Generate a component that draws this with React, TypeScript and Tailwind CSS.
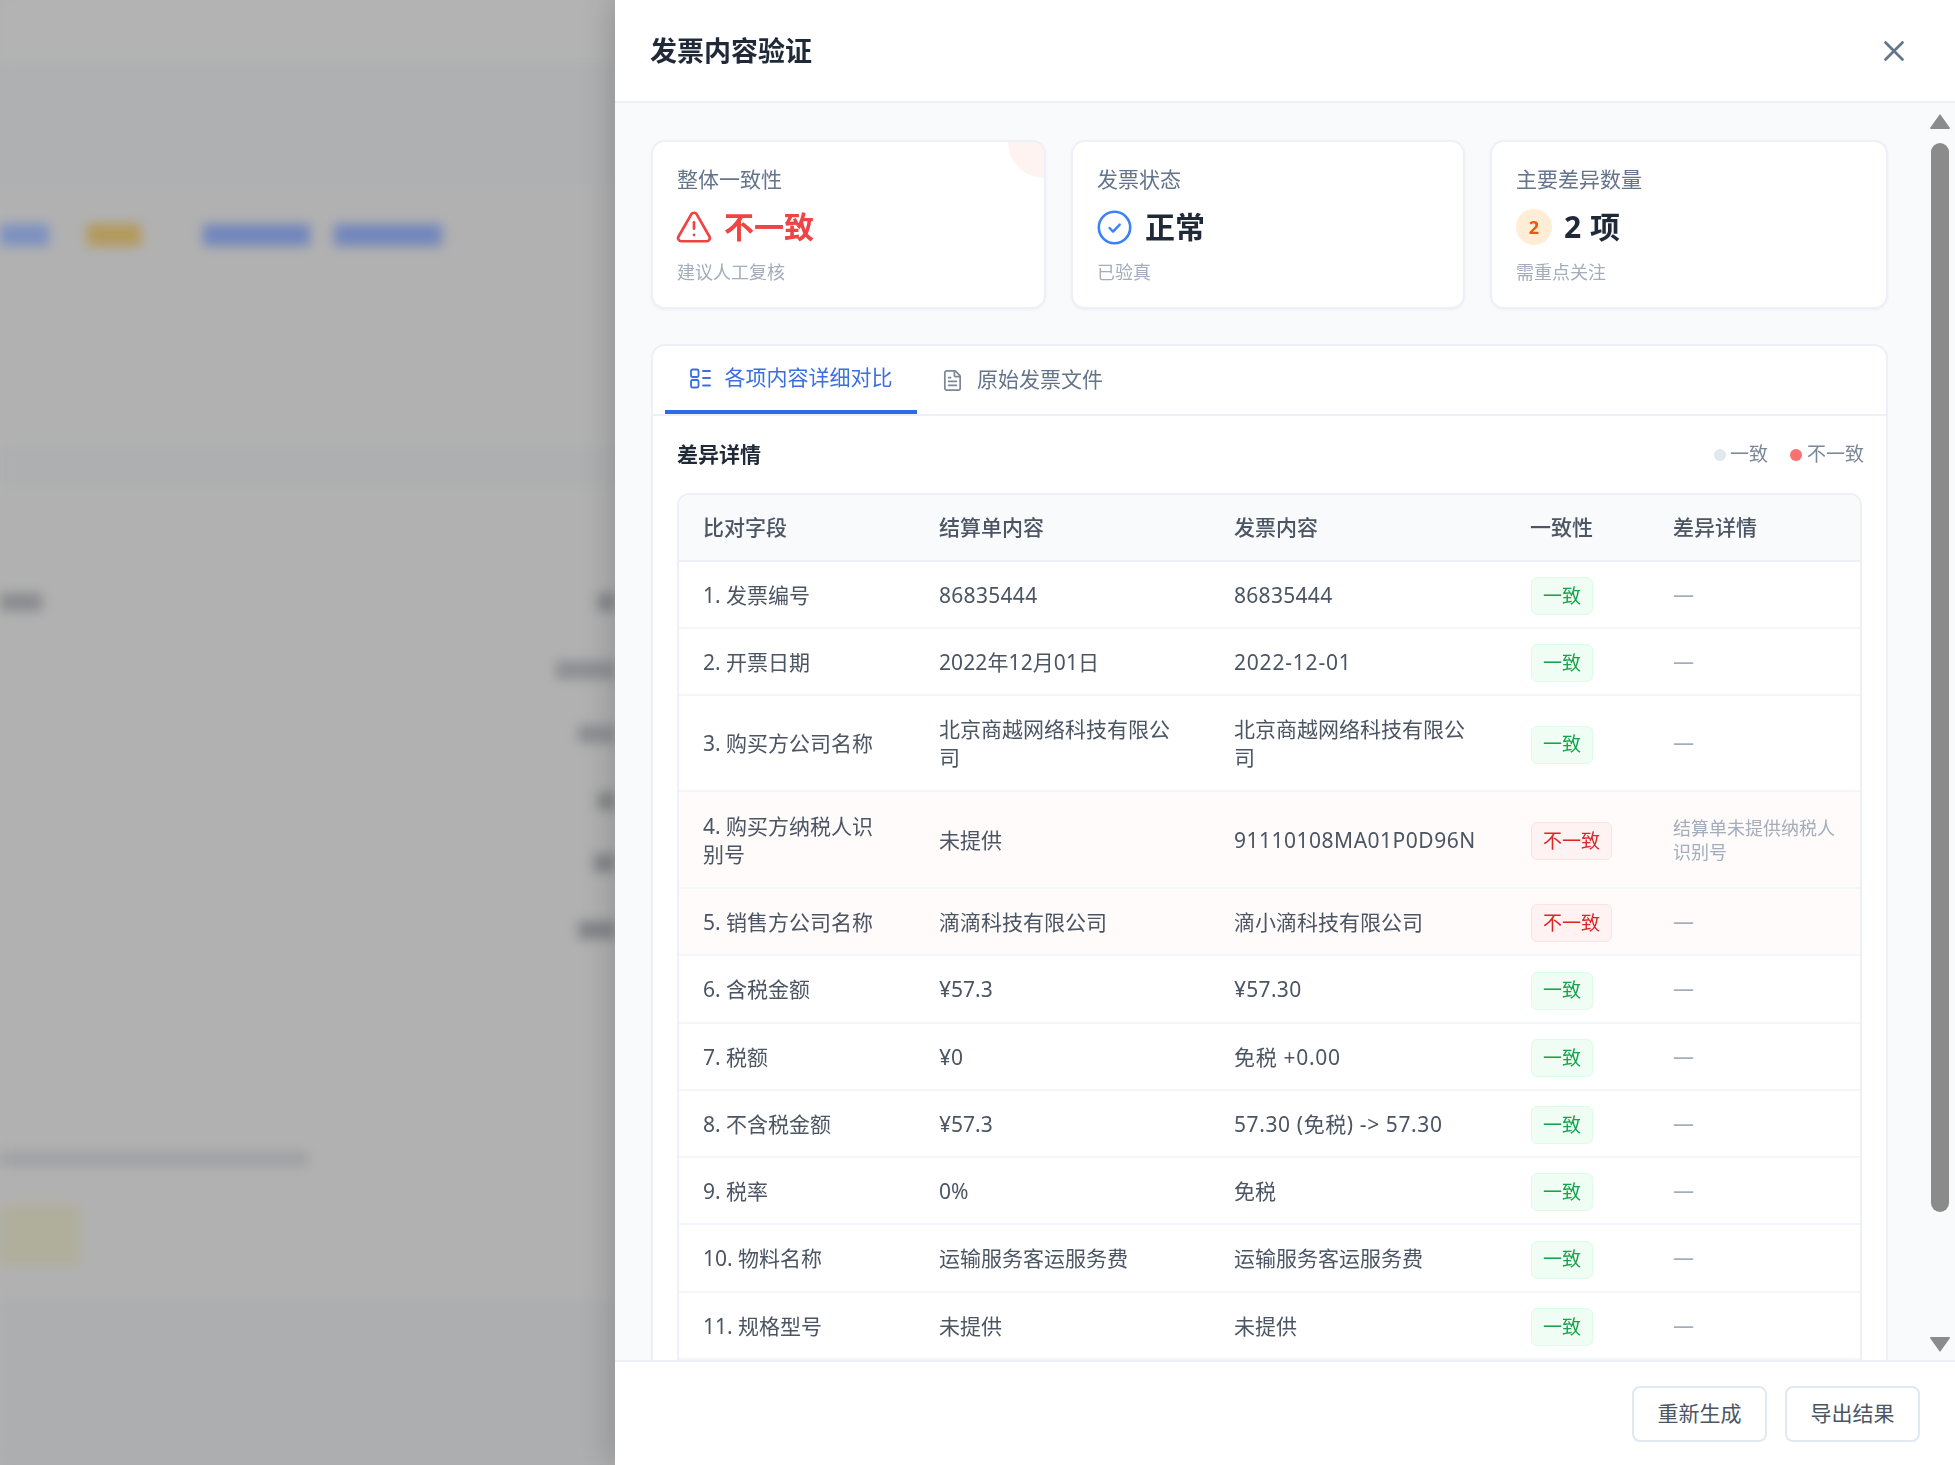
import React from "react";
import { X, FileText, TriangleAlert } from "lucide-react";

type Row = { f: string; a: string; b: string; ok: boolean; d?: string; h: string; at?: string; bt?: string };
const rows: Row[] = [
  { f: "1. 发票编号", a: "86835444", b: "86835444", ok: true, h: "h-[67px]", at: "tracking-[0.3px]", bt: "tracking-[0.3px]" },
  { f: "2. 开票日期", a: "2022年12月01日", b: "2022-12-01", ok: true, h: "h-[67px]", at: "tracking-[0.1px]", bt: "tracking-[0.8px]" },
  { f: "3. 购买方公司名称", a: "北京商越网络科技有限公司", b: "北京商越网络科技有限公司", ok: true, h: "h-[96px]" },
  { f: "4. 购买方纳税人识别号", a: "未提供", b: "91110108MA01P0D96N", ok: false, d: "结算单未提供纳税人识别号", h: "h-[97px]", bt: "tracking-[0.5px]" },
  { f: "5. 销售方公司名称", a: "滴滴科技有限公司", b: "滴小滴科技有限公司", ok: false, h: "h-[67px]" },
  { f: "6. 含税金额", a: "¥57.3", b: "¥57.30", ok: true, h: "h-[68px]", bt: "tracking-[0.3px]" },
  { f: "7. 税额", a: "¥0", b: "免税 +0.00", ok: true, h: "h-[67px]", bt: "tracking-[0.7px]" },
  { f: "8. 不含税金额", a: "¥57.3", b: "57.30 (免税) -> 57.30", ok: true, h: "h-[67px]", bt: "tracking-[0.6px]" },
  { f: "9. 税率", a: "0%", b: "免税", ok: true, h: "h-[67px]" },
  { f: "10. 物料名称", a: "运输服务客运服务费", b: "运输服务客运服务费", ok: true, h: "h-[68px]" },
  { f: "11. 规格型号", a: "未提供", b: "未提供", ok: true, h: "h-[67px]" },
];

function Backdrop() {
  return (
    <div className="w-[615px] shrink-0 h-full overflow-hidden bg-[#b1b1b1]">
      <div className="blur-[6px] flex flex-col">
        <div className="h-[62px] bg-[#b3b3b3]" />
        <div className="h-[121px] bg-[#afb0b2]" />
        <div className="h-[263px] bg-[#b1b1b1] pt-[42px]">
          <div className="flex items-center h-[20px]">
            <div className="w-[49px] h-[22px] bg-[#7c90c0]" />
            <div className="w-[54px] h-[22px] ml-[38px] bg-[#b3995a]" />
            <div className="w-[107px] h-[22px] ml-[62px] bg-[#7286bc]" />
            <div className="w-[108px] h-[22px] ml-[24px] bg-[#7286bc]" />
          </div>
        </div>
        <div className="h-[40px] bg-[#aeafb0]" />
        <div className="h-[814px] bg-[#b1b1b1] flex flex-col">
          <div className="flex justify-between mt-[107px] h-[18px]">
            <div className="w-[42px] bg-[#8a8b8f]" />
            <div className="w-[17px] bg-[#838488]" />
          </div>
          <div className="flex justify-end mt-[50px] h-[18px]">
            <div className="w-[59px] bg-[#8d8e92]" />
          </div>
          <div className="flex justify-end mt-[46px] h-[18px]">
            <div className="w-[37px] bg-[#8d8e92]" />
          </div>
          <div className="flex justify-end mt-[49px] h-[18px]">
            <div className="w-[17px] bg-[#838488]" />
          </div>
          <div className="flex justify-end mt-[44px] h-[18px]">
            <div className="w-[21px] bg-[#838488]" />
          </div>
          <div className="flex justify-end mt-[49px] h-[18px]">
            <div className="w-[37px] bg-[#838488]" />
          </div>
          <div className="w-[308px] h-[14px] mt-[213px] bg-[#9fa0a4]" />
          <div className="w-[80px] h-[61px] mt-[39px] bg-[#b0af9c]" />
        </div>
        <div className="h-[165px] bg-[#adaeb0]" />
      </div>
    </div>
  );
}

function Card({ label, sub, children, decor }: { label: string; sub: string; children: React.ReactNode; decor?: boolean }) {
  return (
    <div className="relative h-[169px] overflow-hidden rounded-[14px] border-2 border-[#edf1f7] bg-white pl-[24px] pt-[23px] shadow-[0_1px_3px_rgba(15,23,42,0.05)]">
      {decor && <div className="absolute right-[-36px] top-[-36px] h-[72px] w-[72px] rounded-full bg-[#fff3f1]" />}
      <div className="text-[21px] leading-[28px] text-[#64748b]">{label}</div>
      <div className="mt-[14px] flex h-[40px] items-center">{children}</div>
      <div className="mt-[12px] text-[18px] leading-[26px] text-[#a3adbb]">{sub}</div>
    </div>
  );
}

function TabGridIcon() {
  return (
    <svg width="21" height="21" viewBox="0 0 21 21" fill="none" stroke="#3b6fe0" strokeWidth="1.8" className="shrink-0">
      <rect x="1" y="1.5" width="7.5" height="7.5" rx="1.5" />
      <rect x="1" y="12" width="7.5" height="7.5" rx="1.5" />
      <path d="M13 3h7M13 10h7M13 17.5h7" strokeLinecap="round" />
    </svg>
  );
}

function CheckCircle() {
  return (
    <svg width="35" height="35" viewBox="0 0 35 35" fill="none" className="shrink-0">
      <circle cx="17.5" cy="17.5" r="15.7" stroke="#3b82f6" strokeWidth="2.6" />
      <path d="M12.5 18l3.6 3.6 6.6-7" stroke="#3b82f6" strokeWidth="2.4" strokeLinecap="round" strokeLinejoin="round" />
    </svg>
  );
}

function Badge({ ok }: { ok: boolean }) {
  return ok ? (
    <span className="inline-flex h-[38px] items-center rounded-[6px] border border-[#dcfce7] bg-[#f0fdf4] px-[11px] text-[19px] text-[#16a34a]">一致</span>
  ) : (
    <span className="inline-flex h-[38px] items-center rounded-[6px] border border-[#fee2e2] bg-[#fef2f2] px-[11px] text-[19px] text-[#dc2626]">不一致</span>
  );
}

function Scrollbar() {
  return (
    <div className="flex w-[30px] shrink-0 flex-col items-center bg-[#f9fafb] pt-[10px]">
      <svg width="22" height="17" viewBox="0 0 22 17" className="shrink-0">
        <path d="M11 1L21 15a1 1 0 0 1-1 1H2a1 1 0 0 1-1-1z" fill="#8b8b8b" />
      </svg>
      <div className="mt-[13px] h-[1069px] w-[18px] rounded-full bg-[#8b8b8b]" />
      <svg width="22" height="17" viewBox="0 0 22 17" className="mt-[124px] shrink-0">
        <path d="M11 16L1 2a1 1 0 0 1 1-1h18a1 1 0 0 1 1 1z" fill="#8b8b8b" />
      </svg>
    </div>
  );
}

export default function App() {
  return (
    <div className="flex h-[1465px] w-[1955px] overflow-hidden bg-[#b1b1b1] font-['Noto_Sans','Noto_Sans_CJK_SC',sans-serif]">
      <Backdrop />
      <div className="relative flex h-full w-[1340px] flex-col bg-white shadow-[-6px_0_28px_rgba(0,0,0,0.16)] blur-[0.6px]">
        <div className="flex h-[103px] shrink-0 items-center justify-between border-b-2 border-[#edf1f7] pl-[35px] pr-[44px]">
          <div className="text-[27px] font-bold leading-[36px] text-[#1f2937]">发票内容验证</div>
          <X size={34} strokeWidth={1.9} className="text-[#64748b]" />
        </div>

        <div className="flex min-h-0 flex-1 overflow-hidden bg-[#f8fafc]">
          <div className="min-w-0 flex-1 pl-[36px] pr-[37px] pt-[37px]">
            <div className="grid grid-cols-[395px_394px_1fr] gap-[25px]">
              <Card label="整体一致性" sub="建议人工复核" decor>
                <TriangleAlert size={38} strokeWidth={1.7} className="ml-[-2px] shrink-0 text-[#ef4444]" />
                <span className="ml-[11px] text-[30px] font-bold leading-[40px] text-[#ef4444]">不一致</span>
              </Card>
              <Card label="发票状态" sub="已验真">
                <CheckCircle />
                <span className="ml-[13px] text-[30px] font-bold leading-[40px] text-[#1f2937]">正常</span>
              </Card>
              <Card label="主要差异数量" sub="需重点关注">
                <div className="flex h-[36px] w-[36px] shrink-0 items-center justify-center rounded-full bg-[#ffedd5] text-[18px] font-bold text-[#ea580c]">2</div>
                <span className="ml-[12px] text-[30px] font-bold leading-[40px] tracking-[0.5px] text-[#1f2937]">2 项</span>
              </Card>
            </div>

            <div className="mt-[35px] rounded-[14px] border-2 border-[#edf1f7] bg-white pb-[40px]">
              <div className="flex h-[70px] items-stretch border-b-2 border-[#edf1f7] pl-[12px]">
                <div className="flex w-[252px] items-center justify-center gap-[14px] border-b-4 border-[#2f6be6] text-[21px] text-[#3b6fe0]">
                  <TabGridIcon />
                  <span>各项内容详细对比</span>
                </div>
                <div className="ml-[24px] flex items-center gap-[13px] text-[21px] text-[#64748b]">
                  <FileText size={23} strokeWidth={1.8} className="shrink-0 text-[#7c8798]" />
                  <span>原始发票文件</span>
                </div>
              </div>

              <div className="flex h-[77px] items-center justify-between pl-[24px] pr-[22px]">
                <div className="text-[21px] font-bold text-[#1f2937]">差异详情</div>
                <div className="flex items-center text-[19px] text-[#7b8696]">
                  <span className="h-[12px] w-[12px] rounded-full bg-[#e2e8f0]" />
                  <span className="ml-[4px]">一致</span>
                  <span className="ml-[22px] h-[12px] w-[12px] rounded-full bg-[#f87171]" />
                  <span className="ml-[5px]">不一致</span>
                </div>
              </div>

              <div className="mx-[24px] overflow-hidden rounded-t-[12px] border-2 border-[#edf1f7]">
                <table className="w-full table-fixed border-collapse text-left text-[21px] text-[#4b5563]">
                  <colgroup>
                    <col className="w-[236px]" />
                    <col className="w-[295px]" />
                    <col className="w-[296px]" />
                    <col className="w-[143px]" />
                    <col />
                  </colgroup>
                  <thead>
                    <tr className="h-[66px] border-b-2 border-[#edf1f7] bg-[#f8fafc]">
                      {["比对字段", "结算单内容", "发票内容", "一致性", "差异详情"].map((t) => (
                        <th key={t} className="pl-[24px] font-medium text-[#4b5563]">{t}</th>
                      ))}
                    </tr>
                  </thead>
                  <tbody>
                    {rows.map((r) => (
                      <tr key={r.f} className={`${r.h} border-b-2 border-[#f3f6fa] ${r.ok ? "bg-white" : "bg-[#fefbfa]"}`}>
                        <td className="pl-[24px] pr-[30px] leading-[28px]">{r.f}</td>
                        <td className={`pl-[24px] pr-[25px] leading-[28px] ${r.at ?? ""}`}>{r.a}</td>
                        <td className={`pl-[24px] pr-[25px] leading-[28px] ${r.bt ?? ""}`}>{r.b}</td>
                        <td className="pl-[25px] pt-[3px]"><Badge ok={r.ok} /></td>
                        <td className="pl-[24px] pr-[25px]">
                          {r.d ? (
                            <div className="text-[18px] leading-[24px] text-[#a3adbb]">{r.d}</div>
                          ) : (
                            <span className="text-[#a3adbb]">—</span>
                          )}
                        </td>
                      </tr>
                    ))}
                  </tbody>
                </table>
              </div>
            </div>
          </div>
          <Scrollbar />
        </div>

        <div className="flex h-[105px] shrink-0 items-center justify-end gap-[18px] border-t-2 border-[#edf1f7] bg-white pr-[35px]">
          <button className="h-[56px] w-[135px] rounded-[8px] border-2 border-[#e2e8f0] bg-white text-[21px] text-[#4b5563]">重新生成</button>
          <button className="h-[56px] w-[135px] rounded-[8px] border-2 border-[#e2e8f0] bg-white text-[21px] text-[#4b5563]">导出结果</button>
        </div>
      </div>
    </div>
  );
}
